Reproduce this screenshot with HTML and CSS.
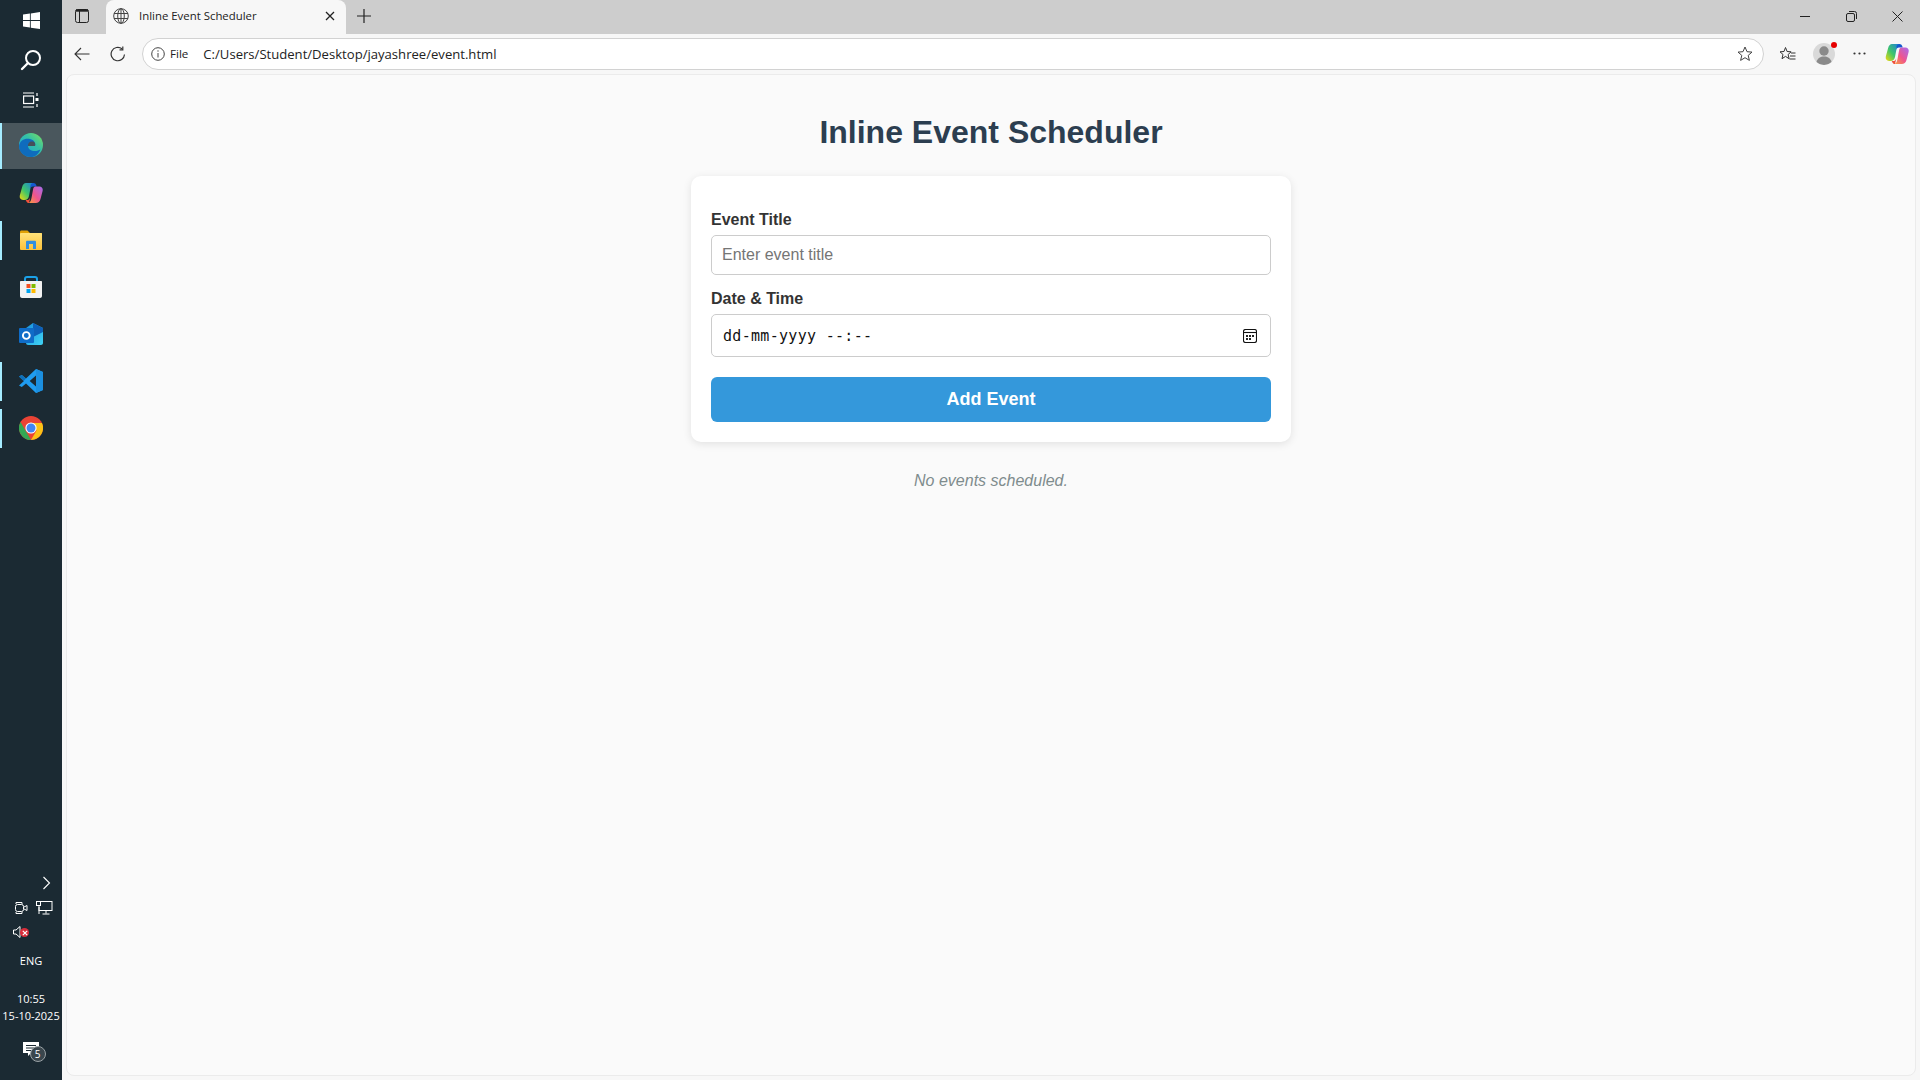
FILE: index.html
```html
<!DOCTYPE html>
<html lang="en">
<head>
    <meta charset="UTF-8">
    <title>Inline Event Scheduler</title>
    <link rel="stylesheet" href="styles.css">
</head>
<body>
    <svg class="sprites" width="0" height="0">
        <defs>
            <linearGradient id="cp-left" x1="0" y1="1" x2="1" y2="0">
                <stop offset="0" stop-color="#f5d90a"/><stop offset=".45" stop-color="#3fc66a"/><stop offset="1" stop-color="#1b7ce0"/>
            </linearGradient>
            <linearGradient id="cp-right" x1="0" y1="1" x2="1" y2="0">
                <stop offset="0" stop-color="#f9a03c"/><stop offset=".45" stop-color="#f0558c"/><stop offset="1" stop-color="#a56cf0"/>
            </linearGradient>
            <linearGradient id="edge-top" x1="0" y1="1" x2="1" y2="0">
                <stop offset="0" stop-color="#1b9de2"/><stop offset=".6" stop-color="#35c1a5"/><stop offset="1" stop-color="#7fe05a"/>
            </linearGradient>
            <linearGradient id="folder" x1="0" y1="0" x2="0" y2="1">
                <stop offset="0" stop-color="#ffe27a"/><stop offset="1" stop-color="#fbc13a"/>
            </linearGradient>
            <linearGradient id="outlook" x1="0" y1="0" x2="1" y2="1">
                <stop offset="0" stop-color="#1a8fdc"/><stop offset="1" stop-color="#40d4f5"/>
            </linearGradient>
            <symbol id="copilot" viewBox="0 0 24 24">
                <path d="M7 2h8c-2 .8-3 2.500-3.500 5L10 15c-.6 2.600-2 4-4.500 4H4C1.600 19 .2 17 .8 14.600L3 6.500C3.700 3.700 5 2 7 2z" fill="url(#cp-left)"/>
                <path d="M14.500 2c1.300 0 2.300.8 2.700 2l.5 1.600h-3.700c-1.400 0-2.600 1-3 2.400l.5-2.400C11.100 3.700 12.600 2 14.500 2z" fill="#1458d0"/>
                <path d="M16 5.500h4.500c2.300 0 3.700 2 3.100 4.400L21.500 18c-.7 2.800-2.300 4-4.800 4H9.500c1.800-.8 2.500-2.500 3-5l1.600-8.700c.2-1.300.9-2.500 1.900-2.800z" fill="url(#cp-right)"/>
                <path d="M10 22c-1.400 0-2.400-.9-2.800-2.100L6.700 19H8c1.500 0 2.800-1 3.300-2.600L10 22z" fill="#f0503c"/>
            </symbol>
        </defs>
    </svg>

    <div class="desktop">
        <aside class="taskbar">
            <div class="task-pinned">
                <div class="sys-btn">
                    <svg width="17" height="17" viewBox="0 0 16 16"><path fill="#fff" d="M0 2.300 6.500 1.400v6.200H0zM7.300 1.300 16 0v7.600H7.300zM0 8.400h6.500v6.200L0 13.700zM7.300 8.400H16V16l-8.700-1.200z"/></svg>
                </div>
                <div class="sys-btn">
                    <svg width="22" height="22" viewBox="0 0 22 22" fill="none" stroke="#fff" stroke-width="2"><circle cx="13" cy="9" r="7"/><path d="M8 14l-6 6" stroke-linecap="round" stroke-width="2.400"/></svg>
                </div>
                <div class="sys-btn sys-btn-last">
                    <svg width="16" height="16" viewBox="0 0 16 16" fill="none" stroke="#fff" stroke-width="1.200"><rect x=".6" y="4" width="10" height="7.500"/><path d="M0 1h11M0 15h11M14 1v3M14 12v3"/><rect x="12.500" y="6" width="3" height="3" fill="#fff" stroke="none"/></svg>
                </div>
                <div class="app app-active">
                    <svg width="24" height="24" viewBox="0 0 24 24"><circle cx="12" cy="12" r="12" fill="url(#edge-top)"/><path d="M0 13C1 7 6 5 11 6c4 .8 6 4 5 7H9c0 3 3 5 7 5 2 0 4-.6 5.400-1.500C19.300 21.500 15.800 24 12 24 5 24 0 19 0 13z" fill="#0f6cbd"/><path d="M9 13c-.3-2.500 1.500-4.500 4-4.500s3.800 2 3 4.500z" fill="#46505a"/></svg>
                </div>
                <div class="app">
                    <svg width="24" height="24" viewBox="0 0 24 24"><use href="#copilot"/></svg>
                </div>
                <div class="app app-open">
                    <svg width="22" height="20" viewBox="0 0 22 20"><path d="M0 2c0-1 .6-1.600 1.500-1.600h6L10 3h12v2H0z" fill="#e0a106"/><rect y="3" width="22" height="17" rx="1" fill="url(#folder)"/><path d="M6 19v-7c0-.8.500-1.300 1.300-1.300h7.400c.8 0 1.300.5 1.300 1.300v7h-3v-5H9v5z" fill="#2f8fe0"/></svg>
                </div>
                <div class="app">
                    <svg width="24" height="24" viewBox="0 0 24 24"><path d="M6 7V4c0-1.200.8-2 2-2h8c1.200 0 2 .8 2 2v3" fill="none" stroke="#1ba1e8" stroke-width="2"/><path d="M1 7c0-.6.400-1 1-1h20c.6 0 1 .4 1 1v14c0 1.200-1 2-2 2H3c-1 0-2-.8-2-2z" fill="#f2f2f2"/><rect x="7.500" y="9" width="4" height="4" fill="#f25022"/><rect x="12.500" y="9" width="4" height="4" fill="#7fba00"/><rect x="7.500" y="14" width="4" height="4" fill="#00a4ef"/><rect x="12.500" y="14" width="4" height="4" fill="#ffb900"/></svg>
                </div>
                <div class="app">
                    <svg width="24" height="24" viewBox="0 0 24 24"><path d="M7 6l7-5 10 5v15c0 1.200-1 2-2 2H9c-1 0-2-.8-2-2z" fill="url(#outlook)"/><path d="M14 1l10 5v4L14 15z" fill="#0e5fb8"/><rect y="6" width="15" height="15" rx="1" fill="#0f6cc8"/><circle cx="7.300" cy="13.500" r="3.400" fill="none" stroke="#fff" stroke-width="1.900"/></svg>
                </div>
                <div class="app app-open">
                    <svg width="24" height="24" viewBox="0 0 24 24"><path d="M17 0l7 3v18l-7 3L7 14.500 2.800 18 0 16.500 5 12 0 7.500 2.800 6 7 9.500zM17 6.500L10.700 12 17 17.500z" fill="#1f9cf0"/><path d="M17 0l7 3v18l-7 3z" fill="#1b8fe0"/><path d="M0 7.500 2.800 6 7 9.500 4.500 12z" fill="#0f6fb8"/></svg>
                </div>
                <div class="app app-open">
                    <svg width="24" height="24" viewBox="0 0 24 24"><circle cx="12" cy="12" r="12" fill="#ea4335"/><path d="M12 24A12 12 0 0 1 1.600 6L7 15.500l5 8.500z" fill="#34a853"/><path d="M23 7A12 12 0 0 1 12 24l5.500-9.500L12 7z" fill="#fbc116"/><circle cx="12" cy="12" r="5.600" fill="#fff"/><circle cx="12" cy="12" r="4.500" fill="#4285f4"/></svg>
                </div>
            </div>

            <div class="tray">
                <div class="tray-chevron">
                    <svg width="9" height="14" viewBox="0 0 9 14" fill="none" stroke="#fff" stroke-width="1.100"><path d="M1.500 1l6 6-6 6"/></svg>
                </div>
                <div class="tray-icons">
                    <svg width="13" height="14" viewBox="0 0 13 14" fill="none" stroke="#fff"><path d="M1 3V1.500h6V3M1 11v1.500h6V11"/><rect x=".5" y="3.500" width="8" height="7" rx="2"/><path d="M9 6l3-1.500v5L9 8" /></svg>
                    <svg width="17" height="14" viewBox="0 0 17 14" fill="none" stroke="#fff"><rect x="3" y=".5" width="13" height="9"/><path d="M10 10v2.500M6.500 13h7M3 6v7"/><rect x=".5" y=".5" width="4" height="4" fill="#1b2a33"/></svg>
                </div>
                <div class="tray-sound">
                    <svg width="9" height="14" viewBox="0 0 9 14" fill="none" stroke="#fff"><path d="M.5 5h2.500L7 1.500v11L3 9H.5z"/></svg>
                    <span class="mute-badge">
                        <svg width="6" height="6" viewBox="0 0 6 6" stroke="#fff" stroke-width="1.200"><path d="M.8.8l4.400 4.400M5.200.8.8 5.200"/></svg>
                    </span>
                </div>
                <div class="tray-lang">ENG</div>
                <div class="tray-clock">
                    <span>10:55</span>
                    <span>15-10-2025</span>
                </div>
                <div class="tray-notify">
                    <svg width="16" height="14" viewBox="0 0 16 14"><path fill="#fff" d="M0 0h16v11H8l-3 3v-3H0z"/><path stroke="#1b2a33" d="M3 3.500h10M3 6h10M3 8.500h6"/></svg>
                    <span class="notify-count">5</span>
                </div>
            </div>
        </aside>

        <div class="browser">
            <div class="tabstrip">
                <div class="tab-toggle">
                    <svg width="14" height="14" viewBox="0 0 14 14" fill="none" stroke="#222"><rect x=".5" y=".5" width="13" height="13" rx="2"/><path d="M1 1.500h12" stroke-width="2.400"/><path d="M4.500 2v11"/></svg>
                </div>
                <div class="tab">
                    <svg width="16" height="16" viewBox="0 0 16 16" fill="none" stroke="#444"><circle cx="8" cy="8" r="7.300"/><ellipse cx="8" cy="8" rx="3.300" ry="7.300"/><path d="M1 5.500h14M1 10.500h14M8 .7v14.600"/></svg>
                    <span class="tab-title">Inline Event Scheduler</span>
                    <svg class="tab-close" width="10" height="10" viewBox="0 0 10 10" stroke="#222" stroke-width="1.300"><path d="M1 1l8 8M9 1l-8 8"/></svg>
                </div>
                <svg class="tab-new" width="14" height="14" viewBox="0 0 14 14" stroke="#222" stroke-width="1.200"><path d="M7 0v14M0 7h14"/></svg>
                <div class="window-btns">
                    <svg width="11" height="11" viewBox="0 0 11 11" stroke="#222"><path d="M0 5.500h10"/></svg>
                    <svg width="11" height="11" viewBox="0 0 11 11" fill="none" stroke="#222"><rect x=".5" y="2.500" width="8" height="8" rx="1.500"/><path d="M3 .5h5.500a2 2 0 0 1 2 2V8"/></svg>
                    <svg width="11" height="11" viewBox="0 0 11 11" stroke="#222"><path d="M.5.5l10 10M10.500.5l-10 10"/></svg>
                </div>
            </div>

            <div class="toolbar">
                <svg class="nav-back" width="16" height="14" viewBox="0 0 16 14" fill="none" stroke="#333" stroke-width="1.100"><path d="M15.500 7H1M7 1 1 7l6 6"/></svg>
                <svg class="nav-reload" width="16" height="16" viewBox="0 0 16 16" fill="none" stroke="#333" stroke-width="1.200"><path d="M14.500 8.500A6.700 6.700 0 1 1 12 2.800"/><path d="M12.800 .5v3.300H9.500"/></svg>
                <div class="addressbar">
                    <svg width="14" height="14" viewBox="0 0 14 14" fill="none" stroke="#444"><circle cx="7" cy="7" r="6.300"/><path d="M7 6v4.500M7 3.300v1.400"/></svg>
                    <span class="addr-scheme">File</span>
                    <span class="addr-url">C:/Users/Student/Desktop/jayashree/event.html</span>
                    <svg class="addr-star" width="16" height="16" viewBox="0 0 16 16" fill="none" stroke="#444"><path d="M8 1l2 4.700 5 .4-3.800 3.300 1.200 5L8 11.700 3.600 14.400l1.200-5L1 6.100l5-.4z"/></svg>
                </div>
                <div class="toolbar-btns">
                    <svg width="17" height="16" viewBox="0 0 17 16" fill="none" stroke="#333"><path d="M6.500 1.500l1.600 4 4 .3-3 2.700 1 4.200L6.500 10.400 3 12.700l1-4.200-3-2.700 4-.3z"/><path d="M12 7h4.500M11 10h5.500M10.500 13h6"/></svg>
                    <span class="profile">
                        <svg width="22" height="22" viewBox="0 0 22 22"><circle cx="11" cy="11" r="11" fill="#d9d9d9"/><circle cx="11" cy="8" r="4.700" fill="#8a8a8a"/><path d="M3.500 19c1-4 4-5.500 7.500-5.500s6.500 1.500 7.500 5.500a11 11 0 0 1-15 0z" fill="#8a8a8a"/></svg>
                        <span class="profile-dot"></span>
                    </span>
                    <svg class="more-dots" width="13" height="3" viewBox="0 0 13 3" fill="#333"><circle cx="1.500" cy="1.500" r="1.100"/><circle cx="6.500" cy="1.500" r="1.100"/><circle cx="11.500" cy="1.500" r="1.100"/></svg>
                    <svg class="copilot-btn" width="24" height="24" viewBox="0 0 24 24"><use href="#copilot"/></svg>
                </div>
            </div>

            <main class="viewport">
                <h1>Inline Event Scheduler</h1>
                <form class="event-card" onsubmit="return false">
                    <label for="event-title">Event Title</label>
                    <input type="text" id="event-title" class="field" placeholder="Enter event title">
                    <label>Date &amp; Time</label>
                    <div class="field date-field">
                        <span>dd-mm-yyyy --:--</span>
                        <svg width="14" height="14" viewBox="0 0 14 14" fill="none" stroke="#111" stroke-width="1.100"><rect x=".5" y=".5" width="13" height="13" rx="2"/><path d="M1 3.500h12"/><path fill="#222" stroke="none" d="M3 6h2v2H3zM6 6h2v2H6zM9 6h2v2H9zM3 9h2v2H3zM6 9h2v2H6z"/></svg>
                    </div>
                    <button type="submit">Add Event</button>
                </form>
                <p class="empty-note">No events scheduled.</p>
            </main>
        </div>
    </div>
</body>
</html>
```

FILE: styles.css
```css
* {
    box-sizing: border-box;
}

html, body {
    height: 100%;
    margin: 0;
    overflow: hidden;
}

body {
    font-family: "Liberation Sans", Arial, sans-serif;
}

.sprites {
    position: absolute;
}

.desktop {
    display: flex;
    height: 1080px;
}

/* windows taskbar, docked left */
.taskbar {
    width: 62px;
    flex: none;
    background: #1b2a33;
    display: flex;
    flex-direction: column;
    justify-content: space-between;
    font-family: "Open Sans", "Noto Sans", sans-serif;
    color: #fff;
}

.sys-btn {
    height: 40px;
    display: flex;
    align-items: center;
    justify-content: center;
}

.sys-btn-last {
    margin-bottom: 3px;
}

.app {
    height: 47px;
    display: flex;
    align-items: center;
    justify-content: center;
    padding-bottom: 2px;
    position: relative;
}

.app-active {
    background: #4a575d;
    height: 46px;
    margin-bottom: 1px;
}

.app-active::before,
.app-open::before {
    content: "";
    position: absolute;
    left: 0;
    top: 4px;
    bottom: 4px;
    width: 2px;
    background: #a5ecff;
}

.app-active::before {
    top: 0;
    bottom: 0;
}

.tray {
    display: flex;
    flex-direction: column;
    align-items: center;
    padding-bottom: 21px;
}

.tray-chevron {
    align-self: flex-end;
    padding-right: 11px;
    height: 14px;
    margin-bottom: 14px;
}

.tray-icons {
    display: flex;
    gap: 8px;
    align-items: center;
    padding-left: 5px;
    height: 14px;
    margin-bottom: 7px;
}

.tray-sound {
    align-self: flex-start;
    margin-left: 13px;
    height: 14px;
    position: relative;
    margin-bottom: 17px;
}

.mute-badge {
    position: absolute;
    left: 7px;
    top: 6px;
    width: 9px;
    height: 9px;
    border-radius: 50%;
    background: #d92d3a;
    display: flex;
    align-items: center;
    justify-content: center;
}

.tray-lang {
    font-size: 11px;
    line-height: 16px;
    margin-bottom: 21px;
}

.tray-clock {
    display: flex;
    flex-direction: column;
    align-items: center;
    font-size: 11px;
    line-height: 17px;
    white-space: nowrap;
    margin-bottom: 15px;
}

.tray-notify {
    position: relative;
    height: 20px;
    margin-left: -1px;
}

.notify-count {
    position: absolute;
    left: 7px;
    top: 7px;
    width: 16px;
    height: 16px;
    border-radius: 50%;
    background: #3a464d;
    border: 1px solid #9aa2a6;
    font-size: 10px;
    line-height: 14px;
    text-align: center;
}

/* edge window */
.browser {
    flex: 1;
    min-width: 0;
    display: flex;
    flex-direction: column;
    background: #f7f7f7;
}

.tabstrip {
    height: 34px;
    flex: none;
    background: #cdcdcd;
    display: flex;
    align-items: center;
}

.tab-toggle {
    width: 44px;
    display: flex;
    justify-content: center;
    padding: 0 4px 2px 0;
}

.tab {
    width: 240px;
    height: 34px;
    background: #f7f7f7;
    border-radius: 8px 8px 0 0;
    display: flex;
    align-items: center;
    padding: 0 11px 3px 7px;
    font-family: "Open Sans", "Noto Sans", sans-serif;
    font-size: 11.4px;
    color: #222;
}

.tab-title {
    margin-left: 10px;
    flex: 1;
}

.tab-new {
    margin: 0 0 2px 11px;
}

.window-btns {
    margin-left: auto;
    display: flex;
    gap: 35px;
    padding: 0 17px 2px 0;
}

.toolbar {
    height: 38px;
    flex: none;
    display: flex;
    align-items: center;
    padding: 1px 8px 0 12px;
}

.nav-reload {
    margin-left: 20px;
}

.addressbar {
    width: 1622px;
    height: 32px;
    margin-left: 16px;
    background: #fff;
    border: 1px solid #d2d2d2;
    border-radius: 16px;
    display: flex;
    align-items: center;
    padding: 0 10px 0 8px;
    font-family: "Open Sans", "Noto Sans", sans-serif;
    color: #222;
}

.addr-scheme {
    margin-left: 5px;
    font-size: 11.6px;
}

.addr-url {
    margin-left: 15px;
    font-size: 13.1px;
    flex: 1;
}

.toolbar-btns {
    display: flex;
    align-items: center;
    margin-left: 15px;
    gap: 17px;
}

.more-dots {
    margin-left: 1px;
}

.copilot-btn {
    margin-left: 2px;
}

.profile {
    position: relative;
    display: flex;
}

.profile-dot {
    position: absolute;
    right: -2px;
    top: -1px;
    width: 6px;
    height: 6px;
    border-radius: 50%;
    background: #e60000;
}

.viewport {
    flex: 1;
    margin: 2px 4px 4px;
    background: #fafafa;
    border: 1px solid #ebebeb;
    border-radius: 8px;
    display: flex;
    flex-direction: column;
    align-items: center;
    padding-top: 39px;
}

h1 {
    margin: 0 0 25px;
    font-size: 32px;
    line-height: 37px;
    color: #2c3e50;
}

.event-card {
    width: 600px;
    background: #fff;
    border-radius: 10px;
    padding: 35px 20px 20px;
    box-shadow: 0 2px 8px rgba(0, 0, 0, 0.1);
    display: flex;
    flex-direction: column;
}

label {
    font-size: 16px;
    line-height: 18px;
    font-weight: bold;
    color: #333;
    margin-bottom: 6px;
}

.field {
    width: 100%;
    height: 40px;
    padding: 0 10px;
    margin-bottom: 15px;
    background: #fff;
    border: 1px solid #ccc;
    border-radius: 5px;
    font-family: inherit;
    font-size: 16px;
}

.field::placeholder {
    color: #757575;
}

.date-field {
    height: 43px;
    margin-bottom: 20px;
    display: flex;
    align-items: center;
    justify-content: space-between;
    padding: 0 10px 0 11px;
    font-family: "DejaVu Sans Mono", monospace;
    font-size: 15px;
    letter-spacing: 0.3px;
    color: #111;
}

.date-field svg {
    margin-right: 3px;
}

button {
    height: 45px;
    background: #3498db;
    color: #fff;
    border: none;
    border-radius: 6px;
    font-family: inherit;
    font-size: 18px;
    font-weight: bold;
    cursor: pointer;
}

.empty-note {
    margin: 30px 0 0;
    font-size: 16px;
    line-height: 18px;
    font-style: italic;
    color: #7f8c8d;
}
```
